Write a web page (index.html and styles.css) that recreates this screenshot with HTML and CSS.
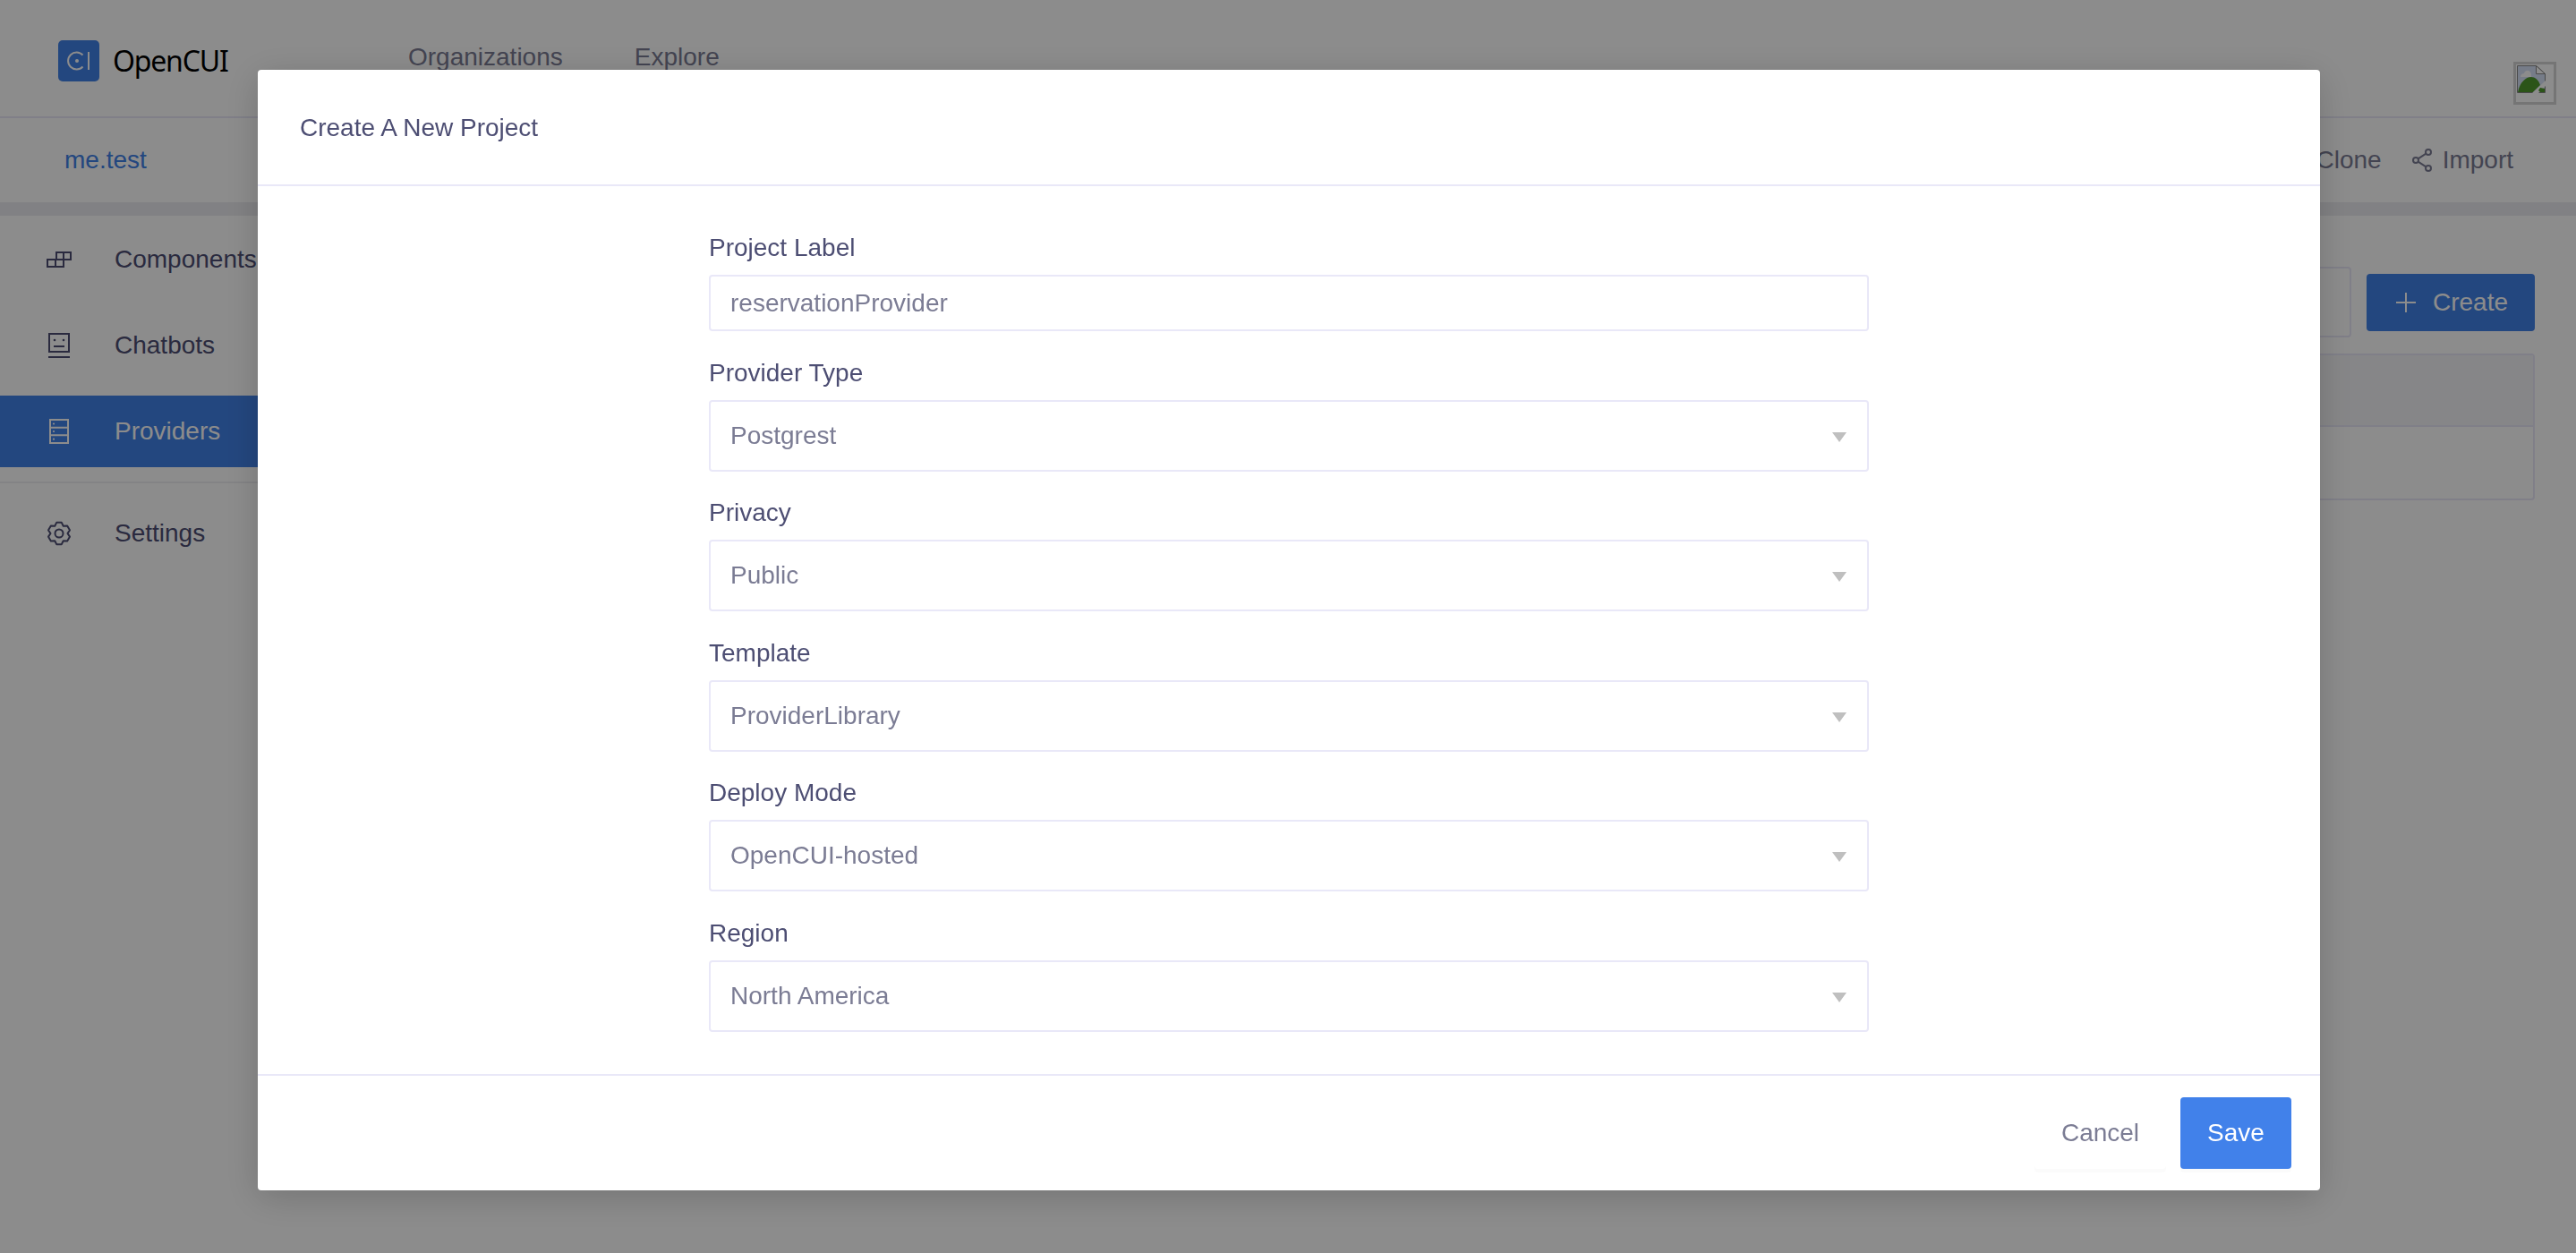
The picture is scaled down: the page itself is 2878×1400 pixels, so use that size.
FILE: index.html
```html
<!DOCTYPE html>
<html lang="en">
<head>
  <meta charset="UTF-8" />
  <title>OpenCUI | Providers</title>
  <link rel="stylesheet" href="styles.css">
</head>
<body>

  <header class="topbar">
    <div class="brand">
      <svg class="brand-mark" viewBox="0 0 46 46">
        <rect width="46" height="46" rx="5" fill="#4181e7" />
        <path d="M27.5 16.5a9.5 9.5 0 1 0 0 13" fill="none" stroke="#fff" stroke-width="2" />
        <circle cx="21" cy="23" r="2" fill="#fff" />
        <path d="M34 13v20" stroke="#fff" stroke-width="2" />
      </svg>
      <span class="brand-name">OpenCUI</span>
    </div>
    <nav class="topnav">
      <a>Organizations</a>
      <a>Explore</a>
    </nav>
    <div class="avatar">
      <svg viewBox="0 0 32 32" width="32" height="32">
        <path d="M.5.5h21l10 9v21H.5z" fill="#d8e2f8" stroke="#888" />
        <path d="M21.500.5v9h10z" fill="#fff" stroke="#888" />
        <path d="M4 13c0-3 2-4 4-4 1-4 6-4 7-1 1 0 1 3 1 5z" fill="#fff" />
        <path d="M1 30c2-11 9-17 15-17 4 0 8 3 10 9l-8 8z" fill="#4f9a2c" />
        <path d="M16 32L32 17v6l-9 9z" fill="#fff" />
        <path d="M26 25l5 1v4h-5l-2-2z" fill="#4f9a2c" />
      </svg>
    </div>
  </header>

  <div class="subbar">
    <a class="project-name">me.test</a>
    <div class="subbar-actions">
      <a class="action">Clone</a>
      <a class="action">
        <svg viewBox="0 0 22 26" width="22" height="26" fill="none" stroke="currentColor" stroke-width="2">
          <circle cx="4" cy="13" r="3" />
          <circle cx="18" cy="4" r="3" />
          <circle cx="18" cy="22" r="3" />
          <path d="M6.6 11.3L15.4 5.7M6.6 14.7L15.4 20.3" />
        </svg>
        Import
      </a>
    </div>
  </div>

  <div class="main">
    <aside class="sidebar">
      <a class="side-item">
        <span class="side-icon">
          <svg viewBox="0 0 28 18" width="28" height="18" fill="none" stroke="currentColor" stroke-width="2">
            <path d="M1 9h18v8H1zM10 9v8M11 9V1h16v8H19M19 1v8" />
          </svg>
        </span>
        Components
      </a>
      <a class="side-item">
        <span class="side-icon">
          <svg viewBox="0 0 24 28" width="24" height="28" fill="none" stroke="currentColor" stroke-width="2">
            <path d="M1 1h22v20H1z" />
            <path d="M0 27h24" />
            <path d="M6 15h12" />
            <circle cx="7" cy="8" r="1.3" fill="currentColor" stroke="none" />
            <circle cx="17" cy="8" r="1.3" fill="currentColor" stroke="none" />
          </svg>
        </span>
        Chatbots
      </a>
      <a class="side-item active">
        <span class="side-icon">
          <svg viewBox="0 0 22 28" width="22" height="28" fill="none" stroke="currentColor" stroke-width="2">
            <path d="M1 1h20v26H1zM1 9.700h20M1 18.300h20" />
            <circle cx="5" cy="5.500" r="1.100" fill="currentColor" stroke="none" />
            <circle cx="5" cy="14" r="1.100" fill="currentColor" stroke="none" />
            <circle cx="5" cy="22.700" r="1.100" fill="currentColor" stroke="none" />
          </svg>
        </span>
        Providers
      </a>
      <div class="side-divider"></div>
      <a class="side-item">
        <span class="side-icon">
          <svg viewBox="0 0 28 28" width="28" height="28" fill="none" stroke="currentColor" stroke-width="2" stroke-linejoin="round">
            <path d="M11.190 1.820h5.620l1.940 3.950 4.390-.29 2.810 4.870-2.450 3.650 2.450 3.650-2.810 4.870-4.390-.29-1.940 3.950h-5.620l-1.940-3.950-4.390.29-2.810-4.870 2.450-3.650-2.450-3.650 2.810-4.870 4.390.29z" />
            <circle cx="14" cy="14" r="4.500" />
          </svg>
        </span>
        Settings
      </a>
    </aside>

    <section class="content">
      <div class="toolbar">
        <div class="search"></div>
        <button class="create-btn">
          <svg viewBox="0 0 22 22" width="22" height="22" stroke="currentColor" stroke-width="2">
            <path d="M11 0v22M0 11h22" />
          </svg>
          Create
        </button>
      </div>
      <div class="table">
        <div class="table-head"></div>
        <div class="table-row"></div>
      </div>
    </section>
  </div>

  <div class="mask">
    <div class="modal">
      <div class="modal-header">Create A New Project</div>

      <form class="modal-body">
        <div class="field">
          <label>Project Label</label>
          <input class="text-input" type="text" value="reservationProvider" />
        </div>
        <div class="field">
          <label>Provider Type</label>
          <div class="select"><span>Postgrest</span><i class="caret"></i></div>
        </div>
        <div class="field">
          <label>Privacy</label>
          <div class="select"><span>Public</span><i class="caret"></i></div>
        </div>
        <div class="field">
          <label>Template</label>
          <div class="select"><span>ProviderLibrary</span><i class="caret"></i></div>
        </div>
        <div class="field">
          <label>Deploy Mode</label>
          <div class="select"><span>OpenCUI-hosted</span><i class="caret"></i></div>
        </div>
        <div class="field">
          <label>Region</label>
          <div class="select"><span>North America</span><i class="caret"></i></div>
        </div>
      </form>

      <div class="modal-footer">
        <button class="btn-cancel">Cancel</button>
        <button class="btn-save">Save</button>
      </div>
    </div>
  </div>

</body>
</html>
```

FILE: styles.css
```css
* {
  box-sizing: border-box;
}

html, body {
  height: 100%;
}

body {
  margin: 0;
  overflow: hidden;
  background-color: #fff;
  color: #4d4e73;
  font-family: "Liberation Sans", Arial, sans-serif;
  font-size: 28px;
  line-height: 42px;
}

/* top bar */
.topbar {
  display: flex;
  align-items: flex-start;
  height: 132px;
  padding: 45px 22px 0 65px;
  border-bottom: 2px solid #e9e8f8;
}

.brand {
  display: flex;
  align-items: center;
  width: 391px;
}

.brand-mark {
  width: 46px;
  height: 46px;
}

.brand-name {
  margin-left: 15px;
  color: #000;
  font-family: "Noto Sans", sans-serif;
  font-size: 32px;
  letter-spacing: -1.2px;
}

.topnav {
  display: flex;
  gap: 80px;
  margin-top: -2px;
  color: #7b7c94;
}

.avatar {
  width: 48px;
  height: 48px;
  margin-top: 24px;
  margin-left: auto;
  padding: 1px;
  border: 3px solid #d5d5d5;
}

.avatar svg {
  display: block;
}

/* project bar */
.subbar {
  display: flex;
  align-items: center;
  justify-content: space-between;
  height: 109px;
  padding: 0 70px 0 72px;
  border-bottom: 15px solid #ececf0;
}

.project-name {
  color: #4181e7;
}

.subbar-actions {
  display: flex;
  gap: 34px;
  color: #7b7c94;
}

.action {
  display: flex;
  align-items: center;
  gap: 12px;
}

/* layout under the bars */
.main {
  display: flex;
}

.sidebar {
  width: 320px;
  padding-top: 9px;
}

.side-item {
  display: flex;
  align-items: center;
  height: 80px;
  margin-bottom: 16px;
  padding-left: 52px;
}

.side-icon {
  display: flex;
  align-items: center;
  justify-content: center;
  width: 28px;
  margin-right: 48px;
}

.side-item.active {
  background-color: #4181e7;
  color: #fff;
}

.side-divider {
  height: 2px;
  margin-bottom: 16px;
  background-color: #eeeef2;
}

.content {
  flex: 1;
  padding: 57px 46px 0 48px;
}

.toolbar {
  display: flex;
  align-items: center;
  justify-content: flex-end;
  gap: 17px;
}

.search {
  width: 400px;
  height: 79px;
  border: 2px solid #e9e8f8;
  border-radius: 4px;
}

.create-btn {
  display: flex;
  align-items: center;
  gap: 19px;
  width: 188px;
  height: 64px;
  padding: 0 0 0 33px;
  border: none;
  border-radius: 4px;
  background-color: #4181e7;
  color: #fff;
  font: inherit;
}

.table {
  margin-top: 18px;
  border: 2px solid #e9e8f8;
  border-radius: 4px;
}

.table-head {
  height: 80px;
  border-bottom: 2px solid #e9e8f8;
  background-color: #f5f5f7;
}

.table-row {
  height: 80px;
}

/* dialog */
.mask {
  position: fixed;
  top: 0;
  right: 0;
  bottom: 0;
  left: 0;
  display: flex;
  align-items: flex-start;
  justify-content: center;
  padding: 78px 0 0 2px;
  background-color: rgba(0, 0, 0, 0.45);
}

.modal {
  width: 2304px;
  height: 1252px;
  border-radius: 4px;
  background-color: #fff;
  box-shadow: 0 8px 40px rgba(0, 0, 0, 0.18);
}

.modal-header {
  height: 130px;
  padding: 44px 47px 0;
  border-bottom: 2px solid #e9e8f8;
}

.modal-body {
  display: flex;
  flex-direction: column;
  gap: 25.5px;
  width: 1296px;
  height: 992px;
  margin: 0 auto;
  padding-top: 48px;
}

.field label {
  display: block;
  margin-bottom: 9px;
}

.text-input {
  display: block;
  width: 100%;
  height: 63px;
  padding: 0 22px;
  border: 2px solid #e9e8f8;
  border-radius: 4px;
  color: #7b7c94;
  font: inherit;
  outline: none;
}

.select {
  display: flex;
  align-items: center;
  justify-content: space-between;
  height: 80px;
  padding: 0 23px 0 22px;
  border: 2px solid #e9e8f8;
  border-radius: 4px;
  color: #7b7c94;
}

.caret {
  width: 0;
  height: 0;
  margin-top: 3px;
  border-top: 11px solid #bfbfbf;
  border-right: 8.5px solid transparent;
  border-left: 8.5px solid transparent;
}

.modal-footer {
  display: flex;
  justify-content: flex-end;
  gap: 16px;
  padding: 24px 32px 0;
  border-top: 2px solid #e9e8f8;
}

.btn-cancel,
.btn-save {
  height: 80px;
  border: none;
  border-radius: 4px;
  font: inherit;
  box-shadow: 0 4px 0 rgba(0, 0, 0, 0.015);
}

.btn-cancel {
  width: 147px;
  background-color: #fff;
  color: #7b7c94;
}

.btn-save {
  width: 124px;
  background-color: #4181ea;
  color: #fff;
}
```
